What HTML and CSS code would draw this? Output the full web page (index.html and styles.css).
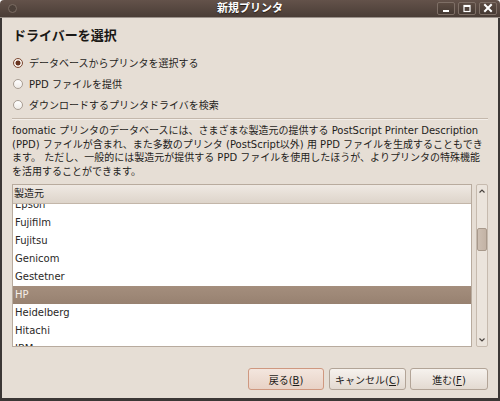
FILE: index.html
```html
<!DOCTYPE html>
<html lang="ja">
<head>
<meta charset="utf-8">
<title>新規プリンタ</title>
<link rel="stylesheet" href="styles.css">
</head>
<body>
<div class="window">
  <div class="titlebar">
    <div class="tb-left"><span class="tb-dot"></span></div>
    <div class="tb-title">新規プリンタ</div>
    <div class="tb-buttons">
      <span class="tb-btn"><svg width="16" height="11" viewBox="0 0 16 11"><rect x="5" y="7" width="6" height="2" fill="#fff"/></svg></span>
      <span class="tb-btn"><svg width="16" height="11" viewBox="0 0 16 11"><rect x="5" y="2.5" width="6" height="6" fill="none" stroke="#fff" stroke-width="1.2"/><rect x="5" y="2" width="6" height="2" fill="#fff"/></svg></span>
      <span class="tb-btn"><svg width="16" height="11" viewBox="0 0 16 11"><path d="M5 2 L11 8 M11 2 L5 8" stroke="#fff" stroke-width="2" stroke-linecap="square"/></svg></span>
    </div>
  </div>
  <div class="frame">
    <h1 class="heading">ドライバーを選択</h1>
    <div class="radios">
      <div class="radio checked"><span class="radio-dot"></span><span>データベースからプリンタを選択する</span></div>
      <div class="radio"><span class="radio-dot"></span><span>PPD ファイルを提供</span></div>
      <div class="radio"><span class="radio-dot"></span><span>ダウンロードするプリンタドライバを検索</span></div>
    </div>
    <div class="sep"></div>
    <p class="desc">foomatic プリンタのデータベースには、さまざまな製造元の提供する PostScript Printer Description<br>(PPD) ファイルが含まれ、また多数のプリンタ (PostScript以外) 用 PPD ファイルを生成することもでき<br>ます。 ただし、一般的には製造元が提供する PPD ファイルを使用したほうが、よりプリンタの特殊機能<br>を活用することができます。</p>
    <div class="listarea">
      <div class="list">
        <div class="list-head">製造元</div>
        <div class="list-body">
          <div class="row first">Epson</div>
          <div class="row">Fujifilm</div>
          <div class="row">Fujitsu</div>
          <div class="row">Genicom</div>
          <div class="row">Gestetner</div>
          <div class="row selected">HP</div>
          <div class="row">Heidelberg</div>
          <div class="row">Hitachi</div>
          <div class="row">IBM</div>
        </div>
      </div>
      <div class="scrollbar">
        <div class="sb-arrow"><svg width="8" height="6" viewBox="0 0 8 6"><polyline points="1.5,4.5 4,2 6.5,4.5" fill="none" stroke="#4a4440" stroke-width="1.2"/></svg></div>
        <div class="sb-track"><div class="sb-thumb"></div></div>
        <div class="sb-arrow"><svg width="8" height="6" viewBox="0 0 8 6"><polyline points="1.5,1.5 4,4 6.5,1.5" fill="none" stroke="#4a4440" stroke-width="1.2"/></svg></div>
      </div>
    </div>
    <div class="buttons">
      <button class="btn btn-default back">戻る(<u>B</u>)</button>
      <button class="btn cancel">キャンセル(<u>C</u>)</button>
      <button class="btn next">進む(<u>F</u>)</button>
    </div>
  </div>
</div>
</body>
</html>
```
FILE: styles.css
```css
* { box-sizing: border-box; }
html, body { margin: 0; padding: 0; }
body {
  width: 500px;
  height: 401px;
  overflow: hidden;
  background: #ffffff;
  font-family: "DejaVu Sans", "Noto Sans CJK JP", sans-serif;
  font-size: 10px;
  color: #1f1d1b;
}
.window {
  width: 500px;
  height: 401px;
  display: flex;
  flex-direction: column;
}
.titlebar {
  height: 18px;
  display: grid;
  grid-template-columns: 1fr auto 1fr;
  align-items: center;
  background: linear-gradient(#63524a, #4a3d36);
  border-bottom: 1px solid #9b928b;
  border-radius: 4px 4px 0 0;
}
.tb-left { display: flex; align-items: center; padding-left: 8px; }
.tb-dot {
  width: 9px;
  height: 9px;
  border-radius: 50%;
  border: 1px solid #7b6c63;
  background: #4c4039;
}
.tb-title {
  color: #ffffff;
  font-weight: bold;
  font-size: 11px;
  line-height: 17px;
  text-shadow: 0 1px 1px #201a16;
}
.tb-buttons {
  display: flex;
  justify-content: flex-end;
  gap: 3px;
  padding-right: 3px;
}
.tb-btn {
  width: 18px;
  height: 13px;
  border: 1px solid #7e6f66;
  border-radius: 2px;
  background: linear-gradient(#5c4c43, #453932);
  display: flex;
  align-items: center;
  justify-content: center;
}
.tb-btn svg { display: block; }
.frame {
  flex: 1;
  display: flex;
  flex-direction: column;
  background: #e6ded5;
  border-left: 2px solid #3b3735;
  border-right: 2px solid #3b3735;
  border-bottom: 3px solid #3b3735;
  padding: 10px 10px 0 10px;
}
.heading {
  margin: 0;
  height: 16px;
  font-size: 13px;
  line-height: 16px;
  font-weight: bold;
  padding-left: 1px;
  color: #1a1816;
}
.radios {
  margin-top: 8px;
  display: flex;
  flex-direction: column;
}
.radio {
  height: 21px;
  display: flex;
  align-items: center;
  gap: 6px;
  padding-left: 1px;
  white-space: nowrap;
}
.radio-dot {
  width: 10px;
  height: 10px;
  flex: none;
  border-radius: 50%;
  border: 1px solid #a89d93;
  background: linear-gradient(#ffffff, #efebe7);
}
.radio.checked .radio-dot {
  border: 1.5px solid #7d4a33;
  background: radial-gradient(circle, #6a3520 0, #6a3520 2.2px, #f5ede7 2.8px);
}
.sep {
  margin-top: 3px;
  height: 2px;
  border-top: 1px solid #c4b8ac;
  border-bottom: 1px solid #f3eee9;
}
.desc {
  margin: 4px 0 0 0;
  line-height: 13.5px;
  white-space: nowrap;
}
.listarea {
  margin-top: 6px;
  height: 163px;
  display: flex;
  gap: 4px;
}
.list {
  flex: 1;
  display: flex;
  flex-direction: column;
  border: 1px solid #b8ab9e;
  background: #ffffff;
}
.list-head {
  height: 19px;
  flex: none;
  line-height: 18px;
  padding-left: 1px;
  background: linear-gradient(#efe9e3, #ddd4ca);
  border-bottom: 1px solid #c3b6a9;
  color: #1f1d1b;
}
.list-body {
  flex: 1;
  overflow: hidden;
}
.row {
  height: 18px;
  line-height: 18px;
  padding-left: 2px;
  color: #2a2826;
}
.row.first { margin-top: -8px; }
.row.selected {
  background: linear-gradient(#a48e7d 0, #9e8877 50%, #978170 100%);
  color: #f4eee8;
}
.scrollbar {
  width: 12px;
  display: flex;
  flex-direction: column;
  border: 1px solid #c6baae;
  border-radius: 2px;
  background: #ebe4dc;
}
.sb-arrow {
  height: 12px;
  display: flex;
  align-items: center;
  justify-content: center;
}
.sb-arrow svg { display: block; }
.sb-track {
  flex: 1;
  padding-top: 31px;
}
.sb-thumb {
  height: 23px;
  border: 1px solid #a8998b;
  border-radius: 2px;
  background: linear-gradient(90deg, #cdbfb2, #c3b3a5);
}
.buttons {
  margin-top: 21px;
  display: flex;
  justify-content: flex-end;
  gap: 5px;
}
.btn {
  height: 22px;
  padding: 0;
  border: 1px solid #b2a497;
  border-radius: 3px;
  background: linear-gradient(#f6f2ee, #e3dad1);
  font-family: "DejaVu Sans", "Noto Sans CJK JP", sans-serif;
  font-size: 10px;
  color: #1f1d1b;
  text-align: center;
}
.btn u { text-decoration: underline; }
.btn-default {
  border-color: #cf9880;
  background: linear-gradient(#f3e6de, #e8d2c6);
}
.back { width: 76px; }
.cancel { width: 77px; }
.next { width: 78px; margin-left: -1px; }
```
